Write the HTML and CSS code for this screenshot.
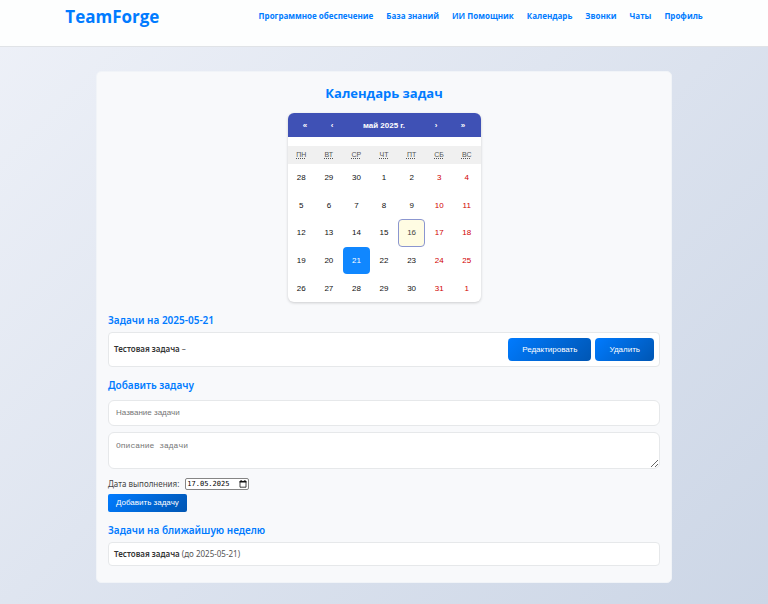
FILE: index.html
```html
<!DOCTYPE html>
<html lang="ru">
<head>
<meta charset="utf-8">
<meta name="viewport" content="width=device-width, initial-scale=1">
<title>TeamForge</title>
<link rel="stylesheet" href="styles.css">
</head>
<body>
<header class="header">
  <div class="header-inner">
    <a class="logo" href="#">TeamForge</a>
    <nav class="nav">
      <a href="#">Программное обеспечение</a>
      <a href="#">База знаний</a>
      <a href="#">ИИ Помощник</a>
      <a href="#">Календарь</a>
      <a href="#">Звонки</a>
      <a href="#">Чаты</a>
      <a href="#">Профиль</a>
    </nav>
  </div>
</header>
<main class="card">
  <h1>Календарь задач</h1>
  <section class="calendar">
    <div class="cal-nav">
      <button type="button">«</button>
      <button type="button">‹</button>
      <button type="button" class="cal-label">май 2025 г.</button>
      <button type="button">›</button>
      <button type="button">»</button>
    </div>
    <div class="weekdays">
      <abbr>пн</abbr><abbr>вт</abbr><abbr>ср</abbr><abbr>чт</abbr><abbr>пт</abbr><abbr>сб</abbr><abbr>вс</abbr>
    </div>
    <div class="days">
      <button type="button">28</button><button type="button">29</button><button type="button">30</button><button type="button">1</button><button type="button">2</button><button type="button" class="weekend">3</button><button type="button" class="weekend">4</button>
      <button type="button">5</button><button type="button">6</button><button type="button">7</button><button type="button">8</button><button type="button">9</button><button type="button" class="weekend">10</button><button type="button" class="weekend">11</button>
      <button type="button">12</button><button type="button">13</button><button type="button">14</button><button type="button">15</button><button type="button" class="today">16</button><button type="button" class="weekend">17</button><button type="button" class="weekend">18</button>
      <button type="button">19</button><button type="button">20</button><button type="button" class="selected">21</button><button type="button">22</button><button type="button">23</button><button type="button" class="weekend">24</button><button type="button" class="weekend">25</button>
      <button type="button">26</button><button type="button">27</button><button type="button">28</button><button type="button">29</button><button type="button">30</button><button type="button" class="weekend">31</button><button type="button" class="weekend">1</button>
    </div>
  </section>

  <h2>Задачи на 2025-05-21</h2>
  <div class="task">
    <p><strong>Тестовая задача</strong> –</p>
    <div class="actions">
      <button type="button" class="btn">Редактировать</button>
      <button type="button" class="btn">Удалить</button>
    </div>
  </div>

  <h2>Добавить задачу</h2>
  <form class="form">
    <input class="field" type="text" placeholder="Название задачи" aria-label="Название задачи">
    <textarea class="field field-area" placeholder="Описание задачи" aria-label="Описание задачи"></textarea>
    <div class="date-row">
      <label for="due">Дата выполнения:</label>
      <span class="date-box">
        <input id="due" type="text" value="17.05.2025">
        <button type="button" aria-label="Открыть календарь">
          <svg viewBox="0 0 8 8" width="8" height="8"><path d="M1 1.4h6v5.8H1z" fill="#fff" stroke="#111" stroke-width=".8"/><path d="M.6 1h6.8v1.6H.6zM1.6 0h1v1h-1zM5.4 0h1v1h-1z" fill="#111"/></svg>
        </button>
      </span>
    </div>
    <button type="submit" class="btn btn-small">Добавить задачу</button>
  </form>

  <h2>Задачи на ближайшую неделю</h2>
  <div class="task">
    <p><strong>Тестовая задача</strong> (до 2025-05-21)</p>
  </div>
</main>
</body>
</html>
```
FILE: styles.css
```css
* { box-sizing: border-box; }

body {
  margin: 0;
  min-height: 100vh;
  background: linear-gradient(135deg, #eef1f8 0%, #ccd6e6 100%);
  color: #444;
  font: 8px/12px "Noto Sans", "Open Sans", sans-serif;
}

a { color: #007bff; text-decoration: none; }
button, input, textarea { margin: 0; font-family: "Liberation Sans", Arial, sans-serif; }
button { cursor: pointer; }

.header {
  padding: 4px 0 16px;
  background: #fdfefe;
  border-bottom: 1px solid #e0e3e7;
}
.header-inner {
  display: flex;
  align-items: center;
  justify-content: space-between;
  width: 83%;
  margin: 0 auto;
  font-family: "Open Sans", "Noto Sans", sans-serif;
}
.logo { font-size: 17px; line-height: 26px; font-weight: 700; }
.nav { display: flex; gap: 13px; padding-bottom: 2px; font-weight: 700; }

.card {
  width: 75%;
  margin: 24px auto;
  padding: 12px 11px 16px;
  background: #f8f9fb;
  border: 1px solid #f1f4f8;
  border-radius: 5px;
}
h1, h2 { margin: 0; color: #007bff; font-family: "Open Sans", "Noto Sans", sans-serif; }
h1 { font-size: 13px; line-height: 18px; text-align: center; }
h2 { margin: 12px 0 5px; font-family: "Noto Sans", sans-serif; font-size: 10px; line-height: 13px; font-weight: 600; }

.calendar {
  width: 193px;
  margin: 11px auto 0;
  overflow: hidden;
  background: #fff;
  border-radius: 6px;
  box-shadow: 0 1px 3px rgba(0, 0, 0, .18);
  font-family: "Liberation Sans", Arial, sans-serif;
}
.calendar button { padding: 0; border: 0; background: none; }
.cal-nav {
  display: grid;
  grid-template-columns: 31px 23px 1fr 23px 31px;
  height: 24px;
  margin-bottom: 9px;
  padding: 0 2px;
  background: #3f51b5;
}
.cal-nav button { color: #fff; font-size: 8px; font-weight: 700; }
.weekdays {
  display: grid;
  grid-template-columns: repeat(7, 1fr);
  background: #f0f0f0;
  color: #555;
  font-size: 7px;
  line-height: 18px;
  text-align: center;
  text-transform: uppercase;
}
.weekdays abbr { text-decoration: underline dotted; }
.days { display: grid; grid-template-columns: repeat(7, 1fr); }
.calendar .days button {
  aspect-ratio: 1;
  border-radius: 4px;
  color: #111;
  font-size: 8px;
}
.calendar .days .weekend { color: #d10000; }
.calendar .days .today { background: #fffce3; border: 1px solid #8b96d0; color: #444; }
.calendar .days .selected { background: #1087ff; color: #fff; }

.task {
  display: flex;
  align-items: center;
  justify-content: space-between;
  padding: 5px;
  background: #fff;
  border: 1px solid #e6e8ea;
  border-radius: 4px;
}
.task p { margin: 0; color: #555; }
.task strong { color: #333; font-weight: 600; }
.actions { display: flex; gap: 4px; }
.btn {
  padding: 0 14px;
  border: 0;
  border-radius: 4px;
  background: linear-gradient(135deg, #007bff, #0056b3);
  color: #fff;
  font-size: 8px;
  line-height: 23px;
}

.form { display: flex; flex-direction: column; align-items: flex-start; padding-top: 3px; }
.field {
  width: 100%;
  height: 26px;
  margin-bottom: 6px;
  padding: 7px;
  background: #fff;
  border: 1px solid #e6e8ea;
  border-radius: 6px;
  color: #333;
  font-size: 8px;
}
.field::placeholder { color: #757575; }
.field-area { height: 37px; margin-bottom: 9px; padding-top: 8px; font-family: "Liberation Mono", monospace; }
.date-row { display: flex; align-items: center; gap: 6px; margin-bottom: 4px; }
.date-box {
  display: flex;
  align-items: center;
  width: 64px;
  height: 12px;
  padding: 0 1px;
  background: #fff;
  border: 1px solid #858585;
  border-radius: 2px;
}
.date-box input {
  flex: 1;
  min-width: 0;
  padding: 0;
  border: 0;
  background: none;
  font: 7px/10px "DejaVu Sans Mono", monospace;
  color: #000;
}
.date-box button { display: flex; padding: 0; border: 0; background: none; }
.btn-small { padding: 0 8px; border-radius: 2px; line-height: 18px; }
```
